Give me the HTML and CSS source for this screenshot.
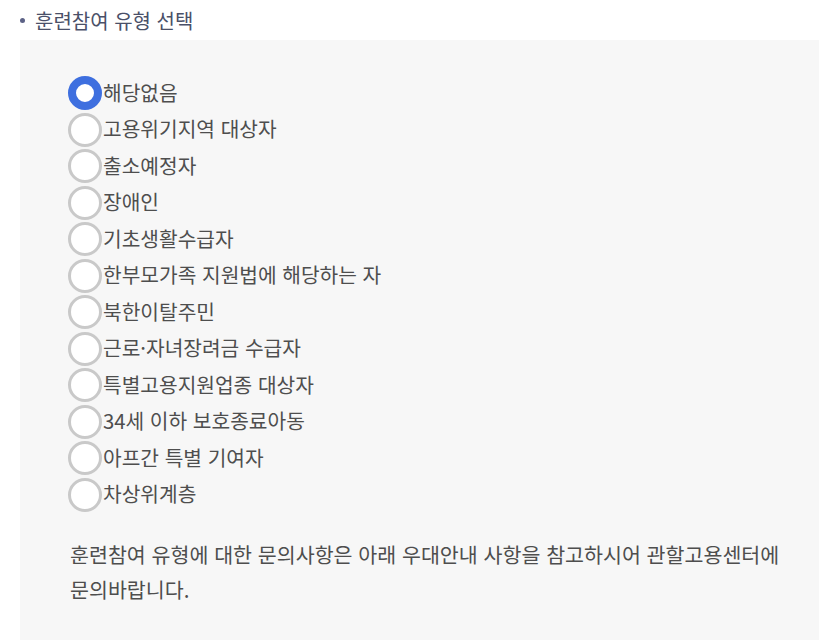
FILE: index.html
```html
<!DOCTYPE html>
<html lang="ko">
<head>
<meta charset="utf-8">
<link rel="stylesheet" href="styles.css">
</head>
<body>
<div class="section">
  <h3 class="title"><span class="dot"></span>훈련참여 유형 선택</h3>
  <div class="box">
    <ul class="radios">
      <li class="row"><span class="radio checked"></span><span class="label">해당없음</span></li>
      <li class="row"><span class="radio"></span><span class="label">고용위기지역 대상자</span></li>
      <li class="row"><span class="radio"></span><span class="label">출소예정자</span></li>
      <li class="row"><span class="radio"></span><span class="label">장애인</span></li>
      <li class="row"><span class="radio"></span><span class="label">기초생활수급자</span></li>
      <li class="row"><span class="radio"></span><span class="label">한부모가족 지원법에 해당하는 자</span></li>
      <li class="row"><span class="radio"></span><span class="label">북한이탈주민</span></li>
      <li class="row"><span class="radio"></span><span class="label">근로·자녀장려금 수급자</span></li>
      <li class="row"><span class="radio"></span><span class="label">특별고용지원업종 대상자</span></li>
      <li class="row"><span class="radio"></span><span class="label">34세 이하 보호종료아동</span></li>
      <li class="row"><span class="radio"></span><span class="label">아프간 특별 기여자</span></li>
      <li class="row"><span class="radio"></span><span class="label">차상위계층</span></li>
    </ul>
    <p class="note">훈련참여 유형에 대한 문의사항은 아래 우대안내 사항을 참고하시어 관할고용센터에<br>문의바랍니다.</p>
  </div>
</div>
</body>
</html>
```

FILE: styles.css
```css
html, body {
  margin: 0;
  padding: 0;
  background: #ffffff;
  font-family: "Noto Sans CJK KR", "Noto Sans", sans-serif;
}
.section {
  width: 819px;
}
.title {
  margin: 0;
  height: 40px;
  display: flex;
  align-items: center;
  padding-left: 20px;
  font-size: 20px;
  font-weight: 400;
  color: #4a5068;
  gap: 10px;
}
.dot {
  width: 5px;
  height: 5px;
  border-radius: 50%;
  background: #5c6286;
}
.box {
  margin-left: 20px;
  background: #f7f7f7;
  padding: 35px 0 40px 48px;
  min-height: 560px;
  box-sizing: border-box;
}
.radios {
  list-style: none;
  margin: 0;
  padding: 0;
}
.row {
  display: flex;
  align-items: center;
  height: 36.5px;
}
.radio {
  width: 34px;
  height: 34px;
  box-sizing: border-box;
  border-radius: 50%;
  border: 3px solid #c9c9c9;
  background: #ffffff;
  flex: none;
}
.radio.checked {
  border: 8px solid #3e6fdf;
}
.label {
  font-size: 20.3px;
  color: #4e4e4e;
  margin-left: 1px;
  margin-bottom: 3px;
}
.note {
  margin: 24px 0 0 2px;
  font-size: 20.6px;
  line-height: 35px;
  color: #4e4e4e;
}
```
